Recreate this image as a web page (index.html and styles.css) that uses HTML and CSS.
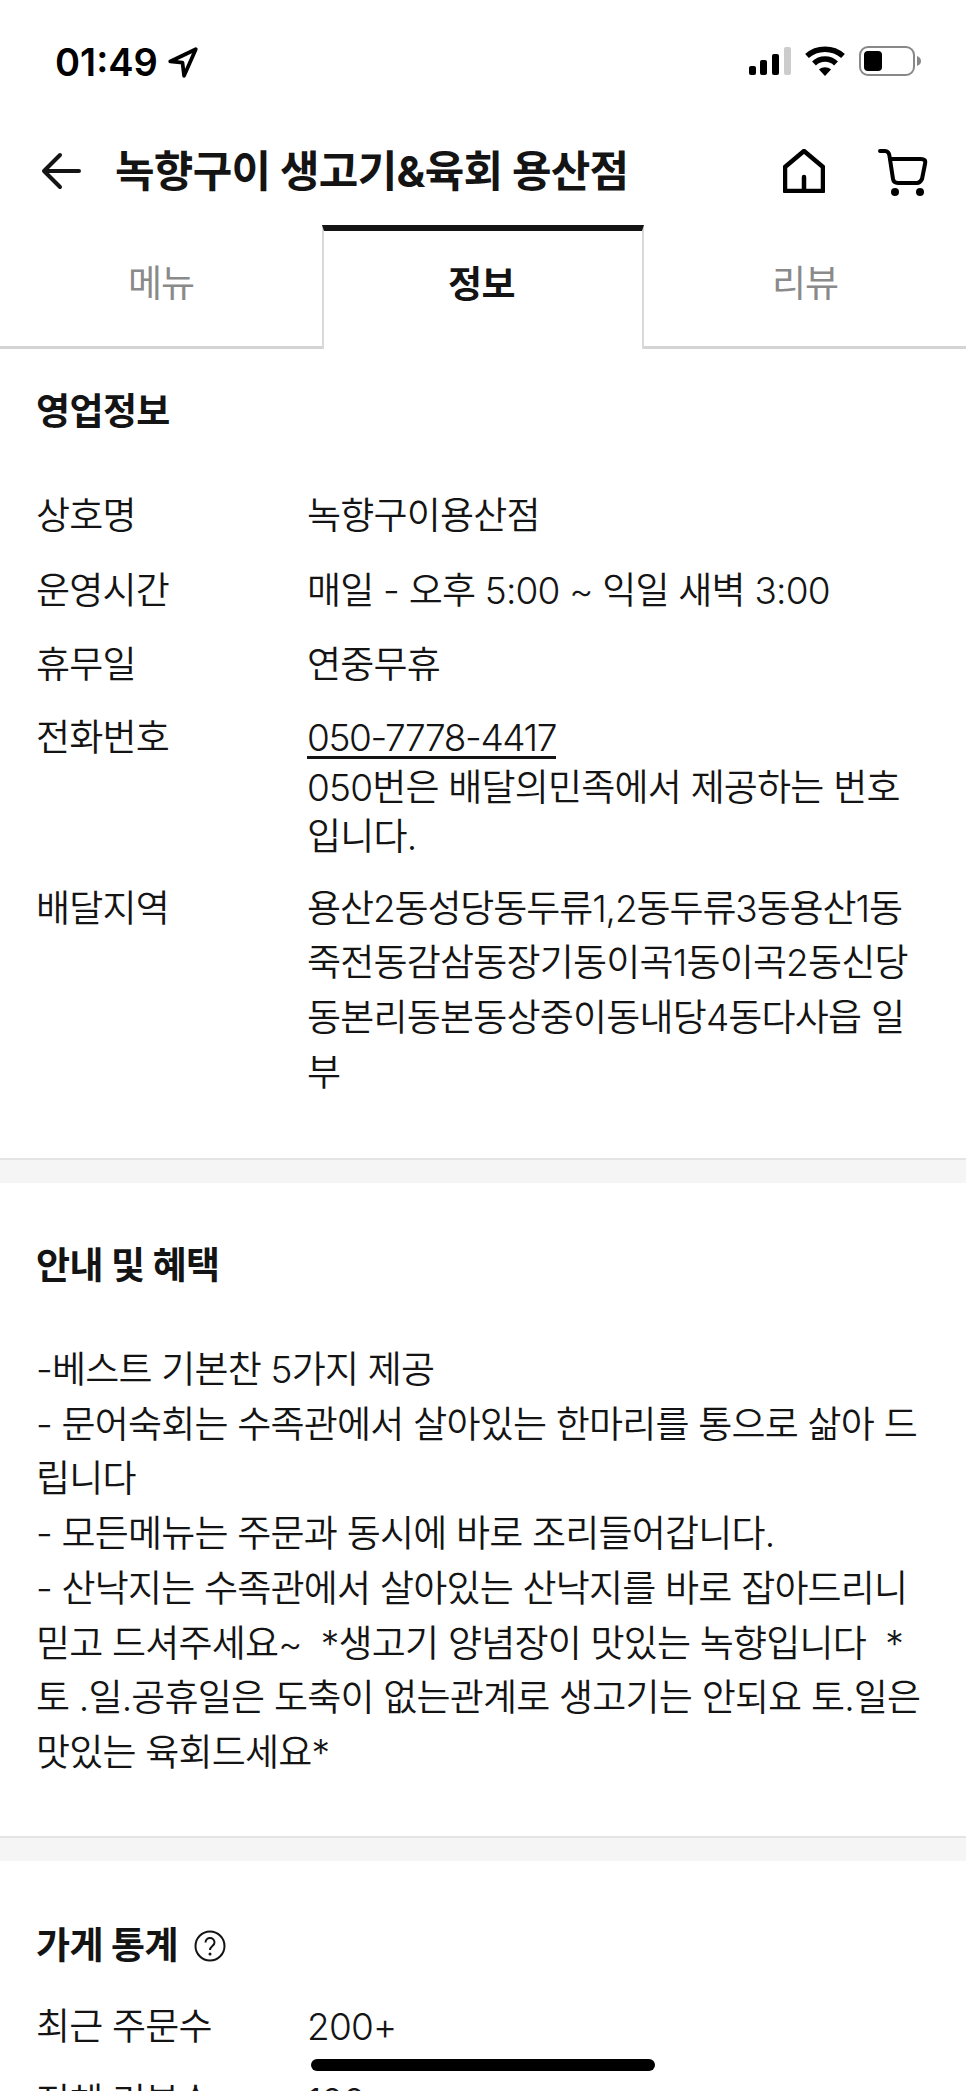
FILE: index.html
```html
<!DOCTYPE html>
<html lang="ko">
<head>
    <meta charset="UTF-8">
    <meta name="viewport" content="width=device-width, initial-scale=1.0">
    <title>녹향구이 생고기&amp;육회 용산점</title>
    <link rel="stylesheet" href="styles.css">
</head>
<body>
    <div class="phone">
        <div class="status-bar">
            <div class="status-time">
                <span>01:49</span>
                <svg class="icon-location" viewBox="0 0 30 30"><path d="M27 3 L3 14.500 L14.500 15.500 L16 28 Z" fill="none" stroke="#000" stroke-width="3.5" stroke-linejoin="round"/></svg>
            </div>
            <div class="status-icons">
                <svg class="icon-signal" viewBox="0 0 42 28">
                    <rect x="0" y="19" width="7" height="9" rx="2" fill="#000"/>
                    <rect x="11" y="13" width="7" height="15" rx="2" fill="#000"/>
                    <rect x="23" y="7" width="7" height="21" rx="2" fill="#000"/>
                    <rect x="35" y="0" width="7" height="28" rx="2" fill="#ccc"/>
                </svg>
                <svg class="icon-wifi" viewBox="0 0 40 30">
                    <path d="M2 10 C12 1 28 1 38 10" fill="none" stroke="#000" stroke-width="5.5"/>
                    <path d="M9 17.500 C15 11.500 25 11.500 31 17.500" fill="none" stroke="#000" stroke-width="5.5"/>
                    <path d="M14 23.500 C17.500 20.500 22.500 20.500 26 23.500 L20 30 Z" fill="#000"/>
                </svg>
                <svg class="icon-battery" viewBox="0 0 62 30">
                    <rect x="1" y="1" width="54" height="28" rx="8" fill="none" stroke="#888" stroke-width="2"/>
                    <rect x="5" y="5" width="18" height="20" rx="4" fill="#000"/>
                    <path d="M58 10 C61 11 62 13 62 15 C62 17 61 19 58 20 Z" fill="#888"/>
                </svg>
            </div>
        </div>

        <header class="top-bar">
            <svg class="icon-back" viewBox="0 0 44 44"><path d="M41 22 H6 M22 6 L6 22 L22 38" fill="none" stroke="#141414" stroke-width="4" stroke-linecap="round" stroke-linejoin="round"/></svg>
            <h1>녹향구이 생고기&amp;육회 용산점</h1>
            <svg class="icon-home" viewBox="0 0 42 44"><path d="M2 18 L21 2 L40 18 V42 H2 Z M21 42 V28" fill="none" stroke="#000" stroke-width="4.5" stroke-linecap="round" stroke-linejoin="round"/></svg>
            <svg class="icon-cart" viewBox="0 0 50 48">
                <path d="M2 3 H7 C10 3 11 5 11.500 8 L15 31 C15.500 34 17 35 20 35 H39 C42 35 43 33 44 31 L47 16 C48 12 46 11 43 11 H12" fill="none" stroke="#000" stroke-width="4" stroke-linecap="round" stroke-linejoin="round"/>
                <circle cx="17" cy="44" r="4" fill="#000"/>
                <circle cx="42" cy="44" r="4" fill="#000"/>
            </svg>
        </header>

        <nav class="tabs">
            <div class="tab">메뉴</div>
            <div class="tab active">정보</div>
            <div class="tab">리뷰</div>
        </nav>

        <section class="section section-info">
            <h2>영업정보</h2>
            <div class="info-row">
                <div class="info-label">상호명</div>
                <div class="info-value">녹향구이용산점</div>
            </div>
            <div class="info-row">
                <div class="info-label">운영시간</div>
                <div class="info-value">매일 - 오후 5:00 ~ 익일 새벽 3:00</div>
            </div>
            <div class="info-row">
                <div class="info-label">휴무일</div>
                <div class="info-value">연중무휴</div>
            </div>
            <div class="info-row row-phone">
                <div class="info-label">전화번호</div>
                <div class="info-value">
                    <a class="phone-link">050-7778-4417</a><br>
                    050번은 배달의민족에서 제공하는 번호<br>입니다.
                </div>
            </div>
            <div class="info-row">
                <div class="info-label">배달지역</div>
                <div class="info-value"><span class="tight-line">용산2동성당동두류1,2동두류3동용산1동</span><br>죽전동감삼동장기동이곡1동이곡2동신당<br>동본리동본동상중이동내당4동다사읍 일<br>부</div>
            </div>
        </section>

        <section class="section section-notice">
            <h2>안내 및 혜택</h2>
            <p class="notice">-베스트 기본찬 5가지 제공<br>- 문어숙회는 수족관에서 살아있는 한마리를 통으로 삶아 드<br>립니다<br>- 모든메뉴는 주문과 동시에 바로 조리들어갑니다.<br>- 산낙지는 수족관에서 살아있는 산낙지를 바로 잡아드리니<br>믿고 드셔주세요~ &nbsp;*생고기 양념장이 맛있는 녹향입니다 &nbsp;*<br>토 .일.공휴일은 도축이 없는관계로 생고기는 안되요 토.일은<br>맛있는 육회드세요*</p>
        </section>

        <section class="section section-stats">
            <h2>가게 통계
                <svg class="icon-help" viewBox="0 0 32 32">
                    <circle cx="16" cy="16" r="14.500" fill="none" stroke="#141414" stroke-width="2"/>
                    <path d="M11.500 12.500 C11.500 6.500 20.500 6.500 20.500 12.500 C20.500 16 16 16 16 20" fill="none" stroke="#141414" stroke-width="2"/>
                    <circle cx="16" cy="24" r="1.500" fill="#141414"/>
                </svg>
            </h2>
            <div class="info-row">
                <div class="info-label">최근 주문수</div>
                <div class="info-value">200+</div>
            </div>
            <div class="info-row">
                <div class="info-label">전체 리뷰수</div>
                <div class="info-value">100</div>
            </div>
        </section>

        <div class="home-indicator"></div>
    </div>
</body>
</html>
```

FILE: styles.css
```css
* {
    box-sizing: border-box;
}
html, body {
    margin: 0;
    padding: 0;
    background-color: white;
}
body {
    font-family: Inter, "Noto Sans CJK KR", sans-serif;
    color: #141414;
}
.phone {
    position: relative;
    width: 966px;
    height: 2091px;
    overflow: hidden;
}

/* status bar */
.status-bar {
    height: 123px;
    padding: 44px 45px 0 55px;
    display: flex;
    justify-content: space-between;
    align-items: flex-start;
}
.status-time {
    display: flex;
    align-items: center;
    gap: 9px;
    font-size: 38px;
    font-weight: 600;
    line-height: 36px;
    color: #000;
}
.icon-location {
    width: 32px;
    height: 32px;
}
.status-icons {
    display: flex;
    align-items: center;
    gap: 14px;
    padding-top: 2px;
}
.icon-signal {
    width: 42px;
    height: 28px;
}
.icon-wifi {
    width: 40px;
    height: 30px;
}
.icon-battery {
    width: 62px;
    height: 30px;
}

/* title row */
.top-bar {
    height: 102px;
    padding: 0 38px 7px;
    display: flex;
    align-items: center;
}
.icon-back {
    width: 44px;
    height: 44px;
    flex-shrink: 0;
}
.top-bar h1 {
    flex: 1;
    margin: 0 0 0 33px;
    font-size: 43px;
    font-weight: 700;
    letter-spacing: -0.7px;
    line-height: 60px;
    white-space: nowrap;
}
.icon-home {
    width: 42px;
    height: 44px;
    flex-shrink: 0;
}
.icon-cart {
    width: 50px;
    height: 48px;
    margin-left: 53px;
    margin-top: 3px;
    flex-shrink: 0;
}

/* tabs */
.tabs {
    height: 124px;
    display: grid;
    grid-template-columns: 322px 322px 322px;
}
.tab {
    display: flex;
    align-items: center;
    justify-content: center;
    padding-bottom: 9px;
    font-size: 37px;
    letter-spacing: -1px;
    color: #8a8a8a;
    border-bottom: 3px solid #d4d4d4;
}
.tab.active {
    padding-bottom: 17px;
    padding-right: 3px;
    font-weight: 700;
    letter-spacing: -0.6px;
    color: #141414;
    border-top: 6px solid #141414;
    border-left: 2px solid #d9d9d9;
    border-right: 2px solid #d9d9d9;
    border-bottom: 0;
}

/* sections */
.section {
    padding: 0 36px;
    background-color: white;
}
.section h2 {
    margin: 0;
    font-size: 37px;
    font-weight: 700;
    letter-spacing: -0.6px;
    line-height: 54px;
}
.section-info {
    padding-top: 36px;
    height: 811px;
    border-bottom: 2px solid #e4e4e4;
}
.section-notice {
    margin-top: 23px;
    padding-top: 56px;
    height: 655px;
    border-bottom: 2px solid #e4e4e4;
}
.section-stats {
    margin-top: 23px;
    padding-top: 58px;
}
.section-info, .section-notice {
    box-shadow: 0 23px 0 #f5f5f5;
}
.info-row {
    display: flex;
    font-size: 37px;
    letter-spacing: -0.8px;
    line-height: 54.700px;
    margin-bottom: 20px;
    font-weight: 350;
}
.section-info h2 {
    margin-bottom: 50px;
}
.section-stats h2 {
    display: flex;
    align-items: center;
    margin-bottom: 27px;
}
.info-label {
    width: 271px;
    flex-shrink: 0;
}
.info-value {
    flex: 1;
    white-space: nowrap;
}
.row-phone {
    line-height: 49.500px;
}
.phone-link {
    text-decoration: underline;
    text-underline-offset: 5px;
    letter-spacing: -1.4px;
}
.tight-line {
    letter-spacing: -1.1px;
}
.notice {
    margin: 50px 0 0;
    font-size: 37px;
    font-weight: 350;
    letter-spacing: -0.8px;
    line-height: 54.700px;
    white-space: nowrap;
}
.icon-help {
    width: 32px;
    height: 32px;
    margin-left: 16px;
}

/* overlay at the bottom of the screen */
.home-indicator {
    position: absolute;
    left: 311px;
    top: 2059px;
    width: 344px;
    height: 12px;
    background-color: #000;
    border-radius: 6px;
}
```
